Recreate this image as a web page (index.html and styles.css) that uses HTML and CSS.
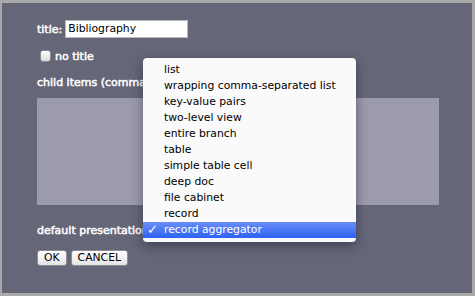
FILE: index.html
```html
<!DOCTYPE html>
<html>
<head>
<meta charset="utf-8">
<link rel="stylesheet" href="styles.css">
</head>
<body>
<div class="frame">
  <div class="row title-row">
    <span class="label">title:</span>
    <div class="textbox">Bibliography</div>
  </div>
  <div class="row check-row">
    <span class="checkbox"></span>
    <span class="label">no title</span>
  </div>
  <div class="label child-label">child items (comma-separated):</div>
  <div class="textarea"></div>
  <div class="label pres-label">default presentation:</div>
  <div class="row buttons">
    <span class="button">OK</span>
    <span class="button">CANCEL</span>
  </div>

  <ul class="menu">
    <li>list</li>
    <li>wrapping comma-separated list</li>
    <li>key-value pairs</li>
    <li>two-level view</li>
    <li>entire branch</li>
    <li>table</li>
    <li>simple table cell</li>
    <li>deep doc</li>
    <li>file cabinet</li>
    <li>record</li>
    <li class="selected"><span class="check">✓</span>record aggregator</li>
  </ul>
</div>
</body>
</html>
```

FILE: styles.css
```css
* { box-sizing: border-box; }
html, body { margin: 0; padding: 0; }
body {
  width: 475px;
  height: 296px;
  overflow: hidden;
  background: #a9a9a9;
  font-family: "DejaVu Sans", sans-serif;
}
.frame {
  position: relative;
  width: 475px;
  height: 296px;
  border-style: solid;
  border-color: #a9a9a9;
  border-width: 3px 3px 3px 2px;
  background: #666679;
  padding: 17px 0 0 35px;
}
.row { display: flex; align-items: center; }
.label {
  color: #fff;
  font-size: 11px;
  -webkit-text-stroke: 0.5px #fff;
  line-height: 13px;
}
.title-row { gap: 3px; height: 18px; }
.textbox {
  width: 123px;
  height: 18px;
  background: #fff;
  border: 1px solid #b8b8c0;
  font-size: 10.8px;
  line-height: 16px;
  padding-left: 2px;
  color: #000;
}
.check-row { margin-top: 12px; gap: 4px; padding-left: 3px; height: 12px; }
.checkbox {
  width: 11px;
  height: 12px;
  border-radius: 3px;
  background: linear-gradient(#ffffff, #dcdcdc);
  border: 1px solid #8a8a95;
}
.child-label { margin-top: 14px; }
.textarea {
  margin-top: 9px;
  width: 402px;
  height: 107px;
  background: #9b9bac;
}
.pres-label { margin-top: 19px; }
.buttons { margin-top: 13px; gap: 4px; }
.button {
  height: 16px;
  padding: 0 6px;
  background: linear-gradient(#ffffff, #e4e4e4);
  border: 1px solid #8d8d95;
  border-radius: 3px;
  font-size: 10.8px;
  line-height: 14px;
  color: #000;
}
.menu {
  position: absolute;
  left: 141px;
  top: 55px;
  width: 213px;
  height: 184px;
  margin: 0;
  padding: 4px 0;
  list-style: none;
  background: #fafafa;
  border-radius: 4px;
  box-shadow: 0 4px 12px rgba(20, 20, 40, 0.45);
  font-size: 10.8px;
}
.menu li {
  height: 16px;
  line-height: 16px;
  padding-left: 21px;
  color: #000;
  position: relative;
}
.menu li.selected {
  color: #fff;
  background: linear-gradient(#6b8ef6, #2c62f5);
}
.check {
  position: absolute;
  left: 4px;
  top: 0;
  font-size: 13px;
  font-weight: bold;
}
```
